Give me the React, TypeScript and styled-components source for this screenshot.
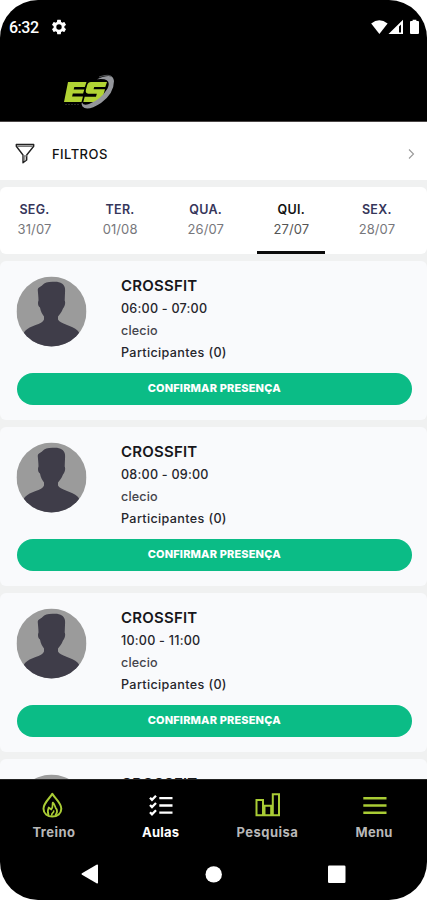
import React from "react";
import styled, { createGlobalStyle } from "styled-components";

const GlobalStyle = createGlobalStyle`
  * { box-sizing: border-box; }
  body { margin: 0; background: #fff; font-family: Inter, Roboto, sans-serif; }
`;

const Phone = styled.div`
  width: 427px;
  height: 900px;
  display: flex;
  flex-direction: column;
  overflow: hidden;
  border-radius: 38px;
  background: #000;
`;

const StatusBar = styled.div`
  height: 54px;
  flex: none;
  display: flex;
  align-items: center;
  padding: 0 7px 0 9px;
  color: #fff;
`;

const Clock = styled.span`
  width: 40.5px;
  font: 500 16px/20px Roboto, sans-serif;
  letter-spacing: -0.5px;
  padding-top: 2px;
`;

const StatusIcons = styled.svg`
  margin-left: auto;
`;

const Brand = styled.header`
  height: 68px;
  flex: none;
  padding: 20px 0 0 62px;
  border-bottom: 1px solid #4a4646;
`;

const Content = styled.main`
  flex: 1;
  min-height: 0;
  overflow: hidden;
  display: flex;
  flex-direction: column;
  gap: 7px;
  background: #f0f1f1;
`;

const FilterRow = styled.div`
  height: 58px;
  flex: none;
  display: flex;
  align-items: center;
  padding: 5px 12px 0 14px;
  background: #fff;
`;

const FilterLabel = styled.span`
  margin-left: 16px;
  flex: 1;
  font-size: 13px;
  font-weight: 500;
  letter-spacing: 0.45px;
  color: #111;
`;

const Days = styled.div`
  height: 67px;
  flex: none;
  display: flex;
  border-radius: 6px;
  background: #fff;
  overflow: hidden;
`;

const DayStrip = styled.div`
  flex: none;
  display: flex;
  margin-left: -8.3px;
`;

const Day = styled.div<{ $active?: boolean }>`
  width: 85.6px;
  display: flex;
  flex-direction: column;
  align-items: center;
  padding-top: 13px;
  color: ${(p) => (p.$active ? "#111" : "#36365a")};
`;

const DayName = styled.span`
  font-size: 12.5px;
  line-height: 19px;
  font-weight: 600;
  letter-spacing: 0.3px;
`;

const DayDate = styled.span<{ $active?: boolean }>`
  font-size: 13px;
  line-height: 20px;
  letter-spacing: 0.1px;
  color: ${(p) => (p.$active ? "#555" : "#77777c")};
`;

const Underline = styled.div`
  width: 68px;
  height: 3px;
  margin-top: auto;
  background: #0a0a0a;
`;

const Card = styled.section`
  height: 159px;
  flex: none;
  padding: 12.5px 15px 0 16.5px;
  border-radius: 6px;
  background: #f9fafc;
`;

const CardBody = styled.div`
  height: 99.5px;
  display: flex;
  gap: 34.5px;
`;

const Avatar = styled.svg`
  flex: none;
  margin: 2px 0 0 -1px;
`;

const Details = styled.div`
  display: flex;
  flex-direction: column;
`;

const Title = styled.span`
  font-size: 15px;
  line-height: 24px;
  font-weight: 600;
  letter-spacing: 0.2px;
  color: #17171b;
`;

const Line = styled.span<{ $spacing: number; $muted?: boolean }>`
  font-size: 12.6px;
  line-height: 22px;
  font-weight: 500;
  letter-spacing: ${(p) => p.$spacing}px;
  color: ${(p) => (p.$muted ? "#45454c" : "#26262c")};
`;

const Confirm = styled.button`
  display: block;
  width: 100%;
  height: 31.5px;
  padding: 0 0 2px;
  border: 0;
  border-radius: 16px;
  background: #0bbc86;
  color: #fff;
  font: 800 11px/20px Inter, sans-serif;
  letter-spacing: 0.15px;
`;

const TabBar = styled.nav`
  height: 70px;
  flex: none;
  display: grid;
  grid-template-columns: repeat(4, 1fr);
  border-top: 1px solid #242424;
`;

const Tab = styled.div<{ $active?: boolean }>`
  display: flex;
  flex-direction: column;
  align-items: center;
  padding-top: 11px;
  color: ${(p) => (p.$active ? "#fff" : "#b8b8b8")};
`;

const TabLabel = styled.span<{ $spacing: number }>`
  margin: 3px -1px 0 0;
  font-size: 13px;
  line-height: 20px;
  font-weight: 700;
  letter-spacing: ${(p) => p.$spacing}px;
`;

const SystemBar = styled.div`
  height: 51px;
  flex: none;
  display: flex;
  justify-content: space-between;
  padding: 15px 80px 0 79px;
`;

const lime = "#a9cc35";

const Gear = () => (
  <svg width="18" height="18" viewBox="0 0 24 24" fill="#fff">
    <path d="M19.14 12.94c.04-.3.06-.61.06-.94s-.02-.64-.07-.94l2.03-1.58a.49.49 0 0 0 .12-.61l-1.92-3.32a.49.49 0 0 0-.59-.22l-2.39.96a7 7 0 0 0-1.62-.94l-.36-2.54a.48.48 0 0 0-.48-.41h-3.84a.47.47 0 0 0-.47.41l-.36 2.54c-.59.24-1.13.57-1.62.94l-2.39-.96a.48.48 0 0 0-.59.22L2.74 8.87a.48.48 0 0 0 .12.61l2.03 1.58c-.05.3-.09.63-.09.94s.02.64.07.94l-2.03 1.58a.49.49 0 0 0-.12.61l1.92 3.32c.12.22.37.29.59.22l2.39-.96c.5.38 1.03.7 1.62.94l.36 2.54c.05.24.24.41.48.41h3.84c.24 0 .44-.17.47-.41l.36-2.54a7 7 0 0 0 1.62-.94l2.39.96c.22.08.47 0 .59-.22l1.92-3.32a.48.48 0 0 0-.12-.61zM12 15.6a3.6 3.6 0 1 1 0-7.2 3.6 3.6 0 0 1 0 7.2z" />
  </svg>
);

const Signals = () => (
  <StatusIcons width="50" height="18" viewBox="0 0 50 18" fill="#fff">
    <path d="M1.2 5.4Q9.2 -1 17.6 5.4L9.4 16Z" />
    <path fillRule="evenodd" d="M18.5 16L33 1.8V16ZM29 14.6h2V6.5L29 8.4Z" />
    <path d="M41 3h1.6V1.8h3.8V3H48q1 0 1 1V15q0 1-1 1h-7q-1 0-1-1V4q0-1 1-1Z" />
  </StatusIcons>
);

const Logo = () => (
  <svg width="54" height="38" viewBox="0 0 54 38">
    <g fill="#b1d334">
      <path d="M6 8H24.5L22.8 13H12.3L11.7 15.5H22.3L21.1 19.5H10.8L10.1 22.5H21L19.5 28H2Z" />
      <path d="M29 8H45L43.3 13H32.2L31.6 15.3H43L40.5 24.3Q39.3 28 35.5 28H21.3L22.7 22.7H34L34.8 19.8H26.3Q23 19.3 23.9 15.8L25.2 11Q26 8 29 8Z" />
    </g>
    <path d="M35 5.3Q51 -2 52 7Q52 19.5 39 29Q25 38 20.5 32.5Q19 30 20 28.5Q21.5 32 27 30Q39 25.5 45.5 14.5Q50.5 3.5 35 5.3Z" fill="#94969b" />
    <path d="M37 3Q48-1 51 4" fill="none" stroke="#66686b" strokeWidth=".8" />
    <path d="M3 30.5H17" stroke="#262626" strokeWidth="1" strokeDasharray="2 1" />
  </svg>
);

const Funnel = () => (
  <svg width="22" height="22" viewBox="0 0 22 22" fill="none" stroke="#222" strokeWidth="1.4" strokeLinejoin="round">
    <path d="M2.3 1.5H19.7V3.3L12.7 12V17L9 19.8V12L2.3 3.3Z" />
    <path d="M3 3.2H19" stroke="#777" strokeWidth="1.5" />
    <path d="M9 12.8H13M10.8 13V18" stroke="#777" strokeWidth="1.2" />
  </svg>
);

const Person = () => (
  <Avatar width="71" height="71" viewBox="-0.5 -0.5 71 71">
    <clipPath id="face"><circle cx="35" cy="35" r="35" /></clipPath>
    <g clipPath="url(#face)">
      <rect width="70" height="70" fill="#9b9b9b" />
      <path d="M36 5.3C43 4.5 48 7 48.5 12C48.8 16 48.2 20 48.2 24C49.2 26 48.5 30 46.5 32C45 36 43 38 41.5 40V43C43 47 56 49 61 54C64 57 65 62 67 72H3C5 62 6 58 8.5 54.5C13 49 26 48 27.5 43V40C26 38 24 35 23.5 31C21.5 30 21 26 22 24C22 20 21.5 17 21.3 14C21 10.5 24 11 26 8.5C28 6 31 5.5 36 5.3Z" fill="#3f3d49" />
    </g>
  </Avatar>
);

const Flame = () => (
  <svg width="26" height="28" viewBox="0 0 26 28" fill="none" stroke={lime} strokeWidth="2" strokeLinejoin="round" strokeLinecap="round">
    <path d="M12.3 2.8C14.5 7 21.3 12 21.3 17.7C21.3 22.5 17.5 25.5 12.3 25.5C7.5 25.5 3.5 22.5 3.5 17.7C3.5 12 10 7 12.3 2.8Z" />
    <path d="M8.5 23.5C7 21 8 18.5 8.7 16.5L11.3 18.5C13.5 16 12 14 12.8 11.5C15.5 13.5 14.5 16.5 16.8 18.5C17.5 21 17 22.5 15.5 24M11.8 24C11.3 22 14 22 13.7 20" strokeWidth="1.7" />
  </svg>
);

const Checklist = () => (
  <svg width="26" height="28" viewBox="0 0 26 28" fill="none" stroke="#fff" strokeWidth="2.3">
    <path d="M12.3 7.2H25.5M12.3 14.5H25.5M12.3 21.7H25.5" />
    <path d="M3 6.7L5 8.8L9 4.7M3 14L5 16.1L9 12M3 21.2L5 23.3L9 19.2" />
  </svg>
);

const Bars = () => (
  <svg width="26" height="28" viewBox="0 0 26 28" fill="none" stroke={lime} strokeWidth="2">
    <path d="M2.5 9H9V24.2H2.5ZM10.5 14.8H17.2V24.2H10.5ZM18.8 3.3H25V24.2H18.8Z" />
  </svg>
);

const Burger = () => (
  <svg width="26" height="28" viewBox="0 0 26 28" stroke={lime} strokeWidth="2.5">
    <path d="M2.3 7.2H25.5M2.3 14.5H25.5M2.3 21.7H25.5" />
  </svg>
);

const days = [
  { name: "SEG.", date: "31/07" },
  { name: "TER.", date: "01/08" },
  { name: "QUA.", date: "26/07" },
  { name: "QUI.", date: "27/07", active: true },
  { name: "SEX.", date: "28/07" },
];

const classes = ["06:00 - 07:00", "08:00 - 09:00", "10:00 - 11:00"];

const tabs = [
  { label: "Treino", Icon: Flame, spacing: 0.45 },
  { label: "Aulas", Icon: Checklist, spacing: 0.2 },
  { label: "Pesquisa", Icon: Bars, spacing: 0.5 },
  { label: "Menu", Icon: Burger, spacing: 0.3 },
];

export default function App() {
  return (
    <>
      <GlobalStyle />
      <Phone>
        <StatusBar>
          <Clock>6:32</Clock>
          <Gear />
          <Signals />
        </StatusBar>
        <Brand><Logo /></Brand>
        <Content>
          <FilterRow>
            <Funnel />
            <FilterLabel>FILTROS</FilterLabel>
            <svg width="8" height="12" viewBox="0 0 8 12" fill="none" stroke="#999" strokeWidth="1.1">
              <path d="M2 1.5L6.5 6L2 10.5" />
            </svg>
          </FilterRow>
          <Days>
            <DayStrip>
              {days.map((d) => (
                <Day key={d.date} $active={d.active}>
                  <DayName>{d.name}</DayName>
                  <DayDate $active={d.active}>{d.date}</DayDate>
                  {d.active && <Underline />}
                </Day>
              ))}
            </DayStrip>
          </Days>
          {classes.map((time) => (
            <Card key={time}>
              <CardBody>
                <Person />
                <Details>
                  <Title>CROSSFIT</Title>
                  <Line $spacing={0.22}>{time}</Line>
                  <Line $spacing={0.15} $muted>clecio</Line>
                  <Line $spacing={0.35}>Participantes (0)</Line>
                </Details>
              </CardBody>
              <Confirm>CONFIRMAR PRESENÇA</Confirm>
            </Card>
          ))}
          <Card>
            <CardBody>
              <Person />
              <Details>
                <Title>CROSSFIT</Title>
              </Details>
            </CardBody>
          </Card>
        </Content>
        <TabBar>
          {tabs.map(({ label, Icon, spacing }) => (
            <Tab key={label} $active={label === "Aulas"}>
              <Icon />
              <TabLabel $spacing={spacing}>{label}</TabLabel>
            </Tab>
          ))}
        </TabBar>
        <SystemBar>
          <svg width="20" height="20" viewBox="0 0 20 20" fill="#fff"><path d="M3 9.2L17.5 .8Q19 0 19 1.5V18.5Q19 20 17.5 19.2L3 10.8Q1.7 10 3 9.2Z" /></svg>
          <svg width="18" height="20" viewBox="0 0 18 20" fill="#fff"><circle cx="9.7" cy="10.4" r="8.2" /></svg>
          <svg width="20" height="20" viewBox="0 0 20 20" fill="#fff"><rect x="1" y="1.5" width="17.5" height="17.5" rx="1.3" /></svg>
        </SystemBar>
      </Phone>
    </>
  );
}
